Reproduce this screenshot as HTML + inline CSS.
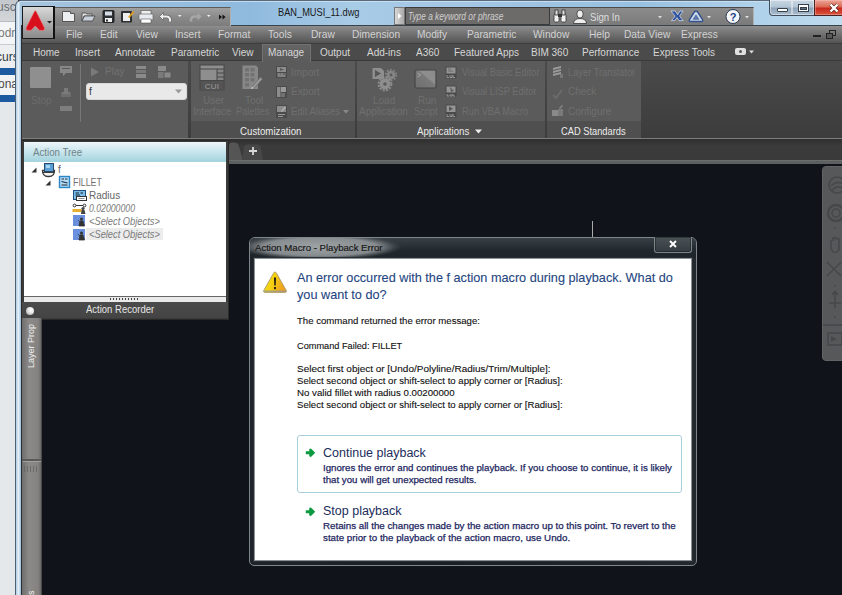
<!DOCTYPE html>
<html><head><meta charset="utf-8">
<style>
*{margin:0;padding:0;box-sizing:border-box}
html,body{width:842px;height:595px;overflow:hidden;background:#10131a;font-family:"Liberation Sans",sans-serif}
.a{position:absolute}
.t{position:absolute;white-space:nowrap;line-height:1}
.mn{position:absolute;top:30px;font-size:10.2px;color:#d2d2d2;white-space:nowrap;line-height:1}
.tb{position:absolute;top:47.5px;font-size:10px;color:#d6d6d6;white-space:nowrap;line-height:1}
.dim{color:#6f6f6f}
.dt{position:absolute;left:297px;font-size:9.6px;color:#111;white-space:nowrap;line-height:1;-webkit-text-stroke:0.12px #111}
</style></head><body>
<!-- ===== background explorer window on left ===== -->
<div class="a" style="left:0;top:0;width:18px;height:595px;background:#e5e8eb"></div>
<div class="a" style="left:0;top:0;width:18px;height:21px;background:linear-gradient(#c4c8cc,#d4d7da)"></div>
<div class="a" style="left:0;top:21px;width:18px;height:1px;background:#b8bcc0"></div>
<div class="a" style="left:0;top:22px;width:18px;height:22px;background:#f4f5f6"></div>
<div class="a" style="left:0;top:44px;width:18px;height:1px;background:#c8ccd0"></div>
<div class="a" style="left:0;top:45px;width:18px;height:23px;background:#eceef0"></div>
<div class="a" style="left:0;top:68px;width:18px;height:7px;background:#1d5aa0"></div>
<div class="a" style="left:0;top:75px;width:18px;height:21px;background:#f2f3f5"></div>
<div class="a" style="left:0;top:95px;width:18px;height:7px;background:#1d5aa0"></div>
<div class="t" style="left:-3px;top:1px;font-size:12px;color:#6a6e72">usc</div>
<div class="t" style="left:-2px;top:27px;font-size:12px;color:#7a7a7a">odr</div>
<div class="t" style="left:-4px;top:51px;font-size:12px;color:#2e3a44">curs</div>
<div class="t" style="left:-2px;top:78px;font-size:12px;color:#4a4a4a">ona</div>
<!-- ===== window frame ===== -->
<div class="a" style="left:15px;top:0;width:827px;height:595px;background:linear-gradient(90deg,#b4cde2 0,#e2eff8 2.5px,#b8d2e6 4px,#8fb0cc 6px);border-radius:6px 0 0 0;border-left:1px solid #4f6072;border-top:1px solid #5a6a7a"></div>
<!-- title bar glass -->
<div class="a" style="left:21px;top:1px;width:821px;height:25px;background:linear-gradient(90deg,#a6c4dd 0%,#8fbade 28%,#a8cbe6 40%,#a2c6e3 55%,#98c0e0 75%,#b0d2ea 90%,#c0dcee 100%)"></div>

<div class="a" style="left:20px;top:1px;width:822px;height:1px;background:#d0e4f2;opacity:0.8"></div>
<!-- app inner frame -->
<div class="a" style="left:21px;top:25px;width:821px;height:570px;background:#10131a;border-left:1px solid #2a2f36"></div>


<!-- ===== menu bar ===== -->
<div class="a" style="left:22px;top:25px;width:820px;height:18px;background:linear-gradient(#38424b 0,#38424b 1px,#8e8e8e 1px,#747474 45%,#5a5a5a 90%,#505050)"></div>
<div class="mn" style="left:66px">File</div>
<div class="mn" style="left:100px">Edit</div>
<div class="mn" style="left:136px">View</div>
<div class="mn" style="left:175px">Insert</div>
<div class="mn" style="left:218px">Format</div>
<div class="mn" style="left:268px">Tools</div>
<div class="mn" style="left:311px">Draw</div>
<div class="mn" style="left:352px">Dimension</div>
<div class="mn" style="left:417px">Modify</div>
<div class="mn" style="left:467px">Parametric</div>
<div class="mn" style="left:533px">Window</div>
<div class="mn" style="left:589px">Help</div>
<div class="mn" style="left:624px">Data View</div>
<div class="mn" style="left:681px">Express</div>
<div class="a" style="left:813px;top:35px;width:8px;height:2px;background:#222"></div>
<div class="a" style="left:829px;top:30px;width:7px;height:6px;border:1px solid #222"></div>
<div class="a" style="left:826px;top:33px;width:7px;height:6px;border:1px solid #222;background:#585858"></div>
<!-- ===== ribbon tabs ===== -->
<div class="a" style="left:22px;top:43px;width:820px;height:17px;background:#4b4b4b;border-top:1px solid #3e3e3e"></div>
<div class="a" style="left:262px;top:44px;width:49px;height:18px;background:linear-gradient(#646464,#5b5b5b);border:1px solid #727272;border-bottom:none;z-index:1"></div>
<div class="tb" style="left:33px">Home</div>
<div class="tb" style="left:75px">Insert</div>
<div class="tb" style="left:115px">Annotate</div>
<div class="tb" style="left:171px">Parametric</div>
<div class="tb" style="left:232px">View</div>
<div class="tb" style="left:268px;z-index:2">Manage</div>
<div class="tb" style="left:320px">Output</div>
<div class="tb" style="left:367px">Add-ins</div>
<div class="tb" style="left:416px">A360</div>
<div class="tb" style="left:454px">Featured Apps</div>
<div class="tb" style="left:531px">BIM 360</div>
<div class="tb" style="left:582px">Performance</div>
<div class="tb" style="left:653px">Express Tools</div>
<div class="a" style="left:735px;top:48px;width:11px;height:7px;background:#e0e0e0;border-radius:2px"></div>
<div class="a" style="left:739px;top:50px;width:3px;height:3px;background:#555;border-radius:50%"></div>
<svg class="a" style="left:749px;top:50px" width="5" height="4"><path d="M0 0.5 H5 L2.5 3.5Z" fill="#ddd"/></svg>
<!-- ===== ribbon panel ===== -->
<div class="a" style="left:22px;top:60px;width:820px;height:79px;background:linear-gradient(#4b4b4b,#3c3c3c);border-top:1px solid #3a3a3a"></div>


<!-- panels -->
<div class="a" style="left:22px;top:61px;width:166px;height:77px;background:#5b5b5b"></div>
<div class="a" style="left:191px;top:61px;width:164px;height:77px;background:#5b5b5b"></div>
<div class="a" style="left:191px;top:121px;width:164px;height:17px;background:#4f4f4f"></div>
<div class="a" style="left:357px;top:61px;width:188px;height:77px;background:#5b5b5b"></div>
<div class="a" style="left:357px;top:121px;width:188px;height:17px;background:#4f4f4f"></div>
<div class="a" style="left:547px;top:61px;width:94px;height:77px;background:#5b5b5b"></div>
<div class="a" style="left:547px;top:121px;width:94px;height:17px;background:#4f4f4f"></div>
<div class="t" style="left:240px;top:127px;font-size:10px;color:#ececec;transform:scaleX(0.97);transform-origin:0 0">Customization</div>
<div class="t" style="left:417px;top:127px;font-size:10px;color:#ececec;transform:scaleX(0.97);transform-origin:0 0">Applications</div>
<svg class="a" style="left:475px;top:129px" width="7" height="5"><path d="M0 0.5 H7 L3.5 4.5Z" fill="#eee"/></svg>
<div class="t" style="left:561px;top:127px;font-size:10px;color:#ececec;transform:scaleX(0.93);transform-origin:0 0">CAD Standards</div>
<!-- action recorder panel content -->
<div class="a" style="left:30px;top:67px;width:21px;height:21px;background:#8f8f8f;border-radius:1px"></div>
<div class="t dim" style="left:31px;top:96px;font-size:10px;color:#6c6c6c">Stop</div>
<svg class="a" style="left:58px;top:64px" width="18" height="50" viewBox="0 0 18 50">
 <path d="M2 2 H14 V9 H8 L5 12 V9 H2 Z" fill="#878787"/>
 <rect x="4" y="4" width="8" height="1" fill="#5b5b5b"/>
 <path d="M4 28 H12 L13 31 H3 Z M6 24 H10 V28 H6 Z" fill="#7a7a7a"/>
 <rect x="3" y="30" width="10" height="3" fill="#6e6e6e"/>
 <rect x="2" y="42" width="12" height="5" fill="#7e7e7e"/>
</svg>
<div class="a" style="left:80px;top:64px;width:1px;height:58px;background:#777"></div>
<svg class="a" style="left:90px;top:67px" width="10" height="10"><path d="M1 0.5 L9 5 L1 9.5Z" fill="#7a7a7a"/></svg>
<div class="t dim" style="left:105px;top:67px;font-size:10px;color:#717171">Play</div>
<svg class="a" style="left:134px;top:65px" width="40" height="14" viewBox="0 0 40 14">
 <rect x="2" y="1" width="10" height="3" fill="#8a8a8a"/><rect x="2" y="5" width="10" height="3" fill="#7a7a7a"/><rect x="2" y="9" width="10" height="4" fill="#8a8a8a"/>
 <rect x="24" y="1" width="8" height="5" fill="#8a8a8a"/><rect x="24" y="7" width="6" height="6" fill="#7a7a7a"/><rect x="30" y="7" width="7" height="6" fill="#8a8a8a" stroke="#5b5b5b"/>
</svg>
<div class="a" style="left:86px;top:83px;width:101px;height:17px;background:#e9e9e9;border-radius:3px;border:1px solid #d8d8d8"></div>
<div class="t" style="left:89px;top:87px;font-size:10px;color:#333">f</div>
<svg class="a" style="left:175px;top:89px" width="7" height="5"><path d="M0 0.5 H7 L3.5 4.5Z" fill="#999"/></svg>

<!-- customization content -->
<svg class="a" style="left:199px;top:64px" width="26" height="27" viewBox="0 0 26 27">
 <rect x="0.5" y="0.5" width="25" height="26" fill="#474747"/>
 <rect x="1.5" y="1.5" width="23" height="3" fill="#8e8e8e"/>
 <rect x="1.5" y="5.5" width="16" height="10.5" fill="#8e8e8e"/>
 <rect x="18.5" y="5.5" width="6" height="3" fill="#858585"/>
 <rect x="18.5" y="9.5" width="6" height="3" fill="#858585"/>
 <rect x="18.5" y="13.5" width="6" height="2.5" fill="#858585"/>
 <rect x="1.5" y="17" width="23" height="9" fill="#545454"/>
 <text x="13" y="24.5" font-family="Liberation Sans" font-size="8" fill="#9c9c9c" text-anchor="middle" letter-spacing="0.3">CUI</text>
</svg>
<svg class="a" style="left:240px;top:64px" width="24" height="27" viewBox="0 0 24 27">
 <path d="M2.5 1.5 H16 L18 3.5 V25 H2.5 Z" fill="#888"/>
 <g fill="#727272">
 <rect x="5" y="4" width="4" height="3.5"/><rect x="10.5" y="4" width="4" height="3.5"/>
 <rect x="5" y="9" width="4" height="3.5"/><rect x="10.5" y="9" width="4" height="3.5"/>
 <rect x="5" y="14" width="4" height="3.5"/><rect x="10.5" y="14" width="4" height="3.5"/>
 <rect x="5" y="19" width="4" height="3.5"/>
 </g>
 <path d="M12 23 L20.5 13 L22.5 15 L14 24.5 Z" fill="#9a9a9a" stroke="#5f5f5f" stroke-width="0.6"/>
 <path d="M11 25 L12 22.5 L14 24.3 Z" fill="#c8c8c8"/>
</svg>
<div class="t dim" style="left:203px;top:96px;font-size:10px">User</div>
<div class="t dim" style="left:193px;top:107px;font-size:10px;transform:scaleX(0.98);transform-origin:0 0">Interface</div>
<div class="t dim" style="left:245px;top:96px;font-size:10px">Tool</div>
<div class="t dim" style="left:236px;top:107px;font-size:10px;transform:scaleX(0.92);transform-origin:0 0">Palettes</div>
<svg class="a" style="left:275px;top:65px" width="14" height="54" viewBox="0 0 14 54">
 <rect x="1" y="1" width="11" height="12" fill="#4a4a4a"/>
 <rect x="2" y="2" width="9" height="5" fill="#8c8c8c"/><path d="M5 3 L9 4.5 L5 6 Z" fill="#5a5a5a"/>
 <rect x="2" y="8" width="9" height="4" fill="#6a6a6a"/><path d="M3 9 H5 M6 9 H8 M3 11 H10" stroke="#a0a0a0" stroke-width="0.9"/>
 <rect x="1" y="21" width="11" height="12" fill="#4a4a4a"/>
 <rect x="2" y="22" width="3.5" height="10" fill="#8c8c8c"/><rect x="6" y="22" width="5" height="5" fill="#9a9a9a"/>
 <path d="M6 29 H10 M6 31 H10" stroke="#a0a0a0" stroke-width="0.9"/>
 <rect x="1" y="40" width="11" height="13" fill="#4a4a4a"/>
 <rect x="2" y="41" width="9" height="6" fill="#8c8c8c"/><path d="M6 46 L10 41.5 L11 42.5 L7 47 Z" fill="#b0b0b0"/>
 <path d="M3 49.5 H10 M3 51.5 H8" stroke="#a0a0a0" stroke-width="0.9"/>
</svg>
<div class="t dim" style="left:291px;top:68px;font-size:10px">Import</div>
<div class="t dim" style="left:291px;top:87px;font-size:10px">Export</div>
<div class="t dim" style="left:291px;top:107px;font-size:10px;transform:scaleX(0.95);transform-origin:0 0">Edit Aliases</div>
<svg class="a" style="left:343px;top:110px" width="6" height="4"><path d="M0 0 H6 L3 3.5Z" fill="#8a8a8a"/></svg>

<!-- applications content -->
<svg class="a" style="left:371px;top:67px" width="28" height="25" viewBox="0 0 28 25">
 <path d="M1.5 1 H10 L13 4 V12 H1.5 Z" fill="#8e8e8e"/>
 <path d="M4 3 L10 6.5 L4 10 Z" fill="#555"/>
 <circle cx="20" cy="8" r="4.3" fill="#858585"/>
 <circle cx="20" cy="8" r="5.2" fill="none" stroke="#858585" stroke-width="1.8" stroke-dasharray="1.7 1.57"/>
 <circle cx="20" cy="8" r="1.4" fill="#5b5b5b"/>
 <circle cx="14" cy="17" r="5.4" fill="#8e8e8e"/>
 <circle cx="14" cy="17" r="6.4" fill="none" stroke="#8e8e8e" stroke-width="2" stroke-dasharray="2 1.35"/>
 <circle cx="14" cy="17" r="1.8" fill="#5b5b5b"/>
</svg>
<svg class="a" style="left:414px;top:69px" width="24" height="20" viewBox="0 0 24 20">
 <defs><linearGradient id="rs" x1="0" y1="1" x2="1" y2="0"><stop offset="0" stop-color="#6e6e6e"/><stop offset="0.55" stop-color="#7a7a7a"/><stop offset="0.6" stop-color="#8e8e8e"/><stop offset="1" stop-color="#8a8a8a"/></linearGradient></defs>
 <rect x="1" y="1" width="21" height="18" rx="1.5" fill="url(#rs)" stroke="#474747" stroke-width="1.2"/>
 <path d="M3.5 4 L6.5 6 L3.5 8" stroke="#9a9a9a" stroke-width="1.2" fill="none"/>
</svg>
<div class="t dim" style="left:373px;top:96px;font-size:10px">Load</div>
<div class="t dim" style="left:359px;top:107px;font-size:10px">Application</div>
<div class="t dim" style="left:418px;top:96px;font-size:10px">Run</div>
<div class="t dim" style="left:414px;top:107px;font-size:10px;transform:scaleX(0.92);transform-origin:0 0">Script</div>
<svg class="a" style="left:445px;top:66px" width="13" height="55" viewBox="0 0 13 55">
 <rect x="0.5" y="0.5" width="11" height="12" fill="#4a4a4a"/>
 <rect x="1.5" y="1.5" width="9" height="6" fill="#949494"/><path d="M3 3 H6 M3 5 H8" stroke="#666" stroke-width="0.9"/>
 <path d="M2 9 V11.5 H4 M5 9 V11.5 H7 V9 M8 9 V11.5 H10" stroke="#a8a8a8" stroke-width="0.8" fill="none"/>
 <rect x="0.5" y="19.5" width="11" height="11" fill="#4a4a4a"/>
 <rect x="1.5" y="20.5" width="9" height="6" fill="#949494"/><path d="M5 21 L9 25 L6 26 Z" fill="#606060"/>
 <path d="M2 28 V30 H4 M5 28 V30 H7 V28 M8 28 V30 H10" stroke="#a8a8a8" stroke-width="0.8" fill="none"/>
 <rect x="0.5" y="38.5" width="11" height="13" fill="#4a4a4a"/>
 <rect x="1.5" y="39.5" width="9" height="6.5" fill="#949494"/><path d="M4 40.5 L8 42.75 L4 45 Z" fill="#555"/>
 <path d="M2 48 V50.5 H4 M5 48 V50.5 H7 V48 M8 48 V50.5 H10" stroke="#a8a8a8" stroke-width="0.8" fill="none"/>
</svg>
<div class="t dim" style="left:462px;top:68px;font-size:10px;transform:scaleX(0.93);transform-origin:0 0">Visual Basic Editor</div>
<div class="t dim" style="left:462px;top:87px;font-size:10px;transform:scaleX(0.93);transform-origin:0 0">Visual LISP Editor</div>
<div class="t dim" style="left:462px;top:107px;font-size:10px;transform:scaleX(0.93);transform-origin:0 0">Run VBA Macro</div>

<!-- cad standards -->
<svg class="a" style="left:551px;top:65px" width="14" height="54" viewBox="0 0 14 54">
 <path d="M2 3 L10 1 V3 L2 5Z M2 6 L10 4 V6 L2 8Z M2 9 L10 7 V9 L2 11Z" fill="#9a9a9a"/>
 <rect x="9" y="9" width="3" height="4" fill="#777"/>
 <path d="M2 30 L5 33 L11 25" stroke="#6a6a6a" stroke-width="2" fill="none"/>
 <rect x="1" y="45" width="6" height="6" fill="#8a8a8a"/><rect x="7" y="44" width="5" height="7" fill="#7a7a7a"/><path d="M8 43 L11 40 L12 41 L9 44Z" fill="#888"/>
</svg>
<div class="t dim" style="left:568px;top:68px;font-size:10px;transform:scaleX(0.93);transform-origin:0 0">Layer Translator</div>
<div class="t dim" style="left:568px;top:87px;font-size:10px">Check</div>
<div class="t dim" style="left:568px;top:107px;font-size:10px">Configure</div>

<!-- ===== QAT ===== -->
<div class="a" style="left:55px;top:7px;width:176px;height:19px;background:linear-gradient(#a0a0a0,#8a8a8a 50%,#7c7c7c);border-top:1px solid #5c5c5c;border-right:1px solid #b0b0b0"></div>
<!-- app button -->
<div class="a" style="left:22px;top:6px;width:33px;height:33px;background:linear-gradient(#d9d9d9,#a9a9a9 60%,#8a8a8a);border:1px solid #1a1a1a;border-right:2px solid #111"></div>
<svg class="a" style="left:22px;top:6px" width="33" height="33" viewBox="0 0 33 33">
 <path d="M13.3 4.8 Q14 4.8 14.6 6.2 L22.4 21.6 Q23.2 24.4 20.8 24.4 L17.6 24.4 L13.3 20 L9 24.4 L5.8 24.4 Q3.4 24.4 4.2 21.6 L12 6.2 Q12.6 4.8 13.3 4.8 Z" fill="#d8101e" stroke="#f08a8a" stroke-width="0.6"/>
 <path d="M25 15 L30 15 L27.5 17.5 Z" fill="#222"/>
</svg>
<!-- QAT icons -->
<svg class="a" style="left:62px;top:9px" width="170" height="16" viewBox="0 0 170 16">
 <!-- new -->
 <path d="M0.5 2.5 H8.5 V4.5 H12.5 V12.5 H0.5 Z" fill="#eceef0" stroke="#555" stroke-width="1"/>
 <!-- open -->
 <path d="M20 4 H24 L25 5 H30 V7 H22 L20 12 Z" fill="#ddd" stroke="#444" stroke-width="0.8"/>
 <path d="M20 12 L22.5 7 H33 L30.5 12 Z" fill="#c9d2dc" stroke="#444" stroke-width="0.8"/>
 <!-- save -->
 <rect x="41" y="1.5" width="11" height="12" rx="1" fill="#2c2f33" stroke="#222"/>
 <rect x="43" y="2.5" width="7" height="4" fill="#d6dde6"/>
 <rect x="43" y="9" width="7" height="4" fill="#f0f0f0"/>
 <rect x="44" y="10.5" width="2" height="2" fill="#333"/>
 <!-- saveas -->
 <rect x="59" y="2" width="11" height="11.5" rx="1" fill="#2c2f33"/>
 <rect x="61" y="4" width="7" height="8" fill="#eee"/>
 <path d="M66 8 L71 2 L72.5 3 L67.5 9 Z" fill="#e0a020"/>
 <!-- print -->
 <rect x="79" y="1.5" width="10" height="4" fill="#eee" stroke="#555" stroke-width="0.6"/>
 <rect x="77" y="5" width="14" height="6" rx="1" fill="#e8ecf0" stroke="#555" stroke-width="0.6"/>
 <rect x="79" y="10" width="10" height="4" fill="#fff" stroke="#555" stroke-width="0.6"/>
 <!-- undo -->
 <path d="M100.5 7.5 H104 Q108 7.5 108 11 V12.5" fill="none" stroke="#666" stroke-width="3.6"/>
 <path d="M97.5 7.5 L101.5 3.5 V11.5 Z" fill="#eee" stroke="#666" stroke-width="0.8"/>
 <path d="M100.5 7.5 H104 Q108 7.5 108 11 V12.5" fill="none" stroke="#f0f0f0" stroke-width="2.2"/>
 <path d="M116 6 L119.5 6 L117.75 8 Z" fill="#f4f4f4"/>
 <!-- redo -->
 <path d="M136.5 7.5 H133 Q129 7.5 129 11 V12.5" fill="none" stroke="#a5a5a5" stroke-width="2.6"/>
 <path d="M139.5 7.5 L135.5 3.5 V11.5 Z" fill="#a5a5a5"/>
 <path d="M145 6 L148.5 6 L146.75 8 Z" fill="#f4f4f4"/>
 <!-- more -->
 <path d="M157 5.5 L160 8 L157 10.5 Z M160.5 5.5 L163.5 8 L160.5 10.5 Z" fill="#111"/>
</svg>
<!-- title -->
<div class="t" style="left:278px;top:7px;font-size:10.5px;color:#1a1a1a;transform:scaleX(0.88);transform-origin:0 0">BAN_MUSI_11.dwg</div>

<!-- ===== InfoCenter ===== -->
<div class="a" style="left:394px;top:7px;width:11px;height:18px;background:linear-gradient(90deg,#d8d8d8,#a8a8a8);border:1px solid #777"></div>
<svg class="a" style="left:397px;top:12px" width="6" height="8"><path d="M1 1 L4.5 4 L1 7Z" fill="#fff"/></svg>
<div class="a" style="left:405px;top:7px;width:349px;height:18px;background:linear-gradient(#8c8c8c,#7a7a7a);border-top:1px solid #4a4a4a;border-right:1px solid #b0b0b0"></div>
<div class="a" style="left:405px;top:7px;width:145px;height:18px;background:#6d6b6a;border:1px solid #3a3a3a"></div>
<div class="t" style="left:408px;top:12px;font-size:10px;font-style:italic;color:#cfcfcf;transform:scaleX(0.83);transform-origin:0 0">Type a keyword or phrase</div>
<svg class="a" style="left:552px;top:8px" width="200" height="17" viewBox="0 0 200 17">
 <!-- binoculars -->
 <rect x="2" y="6" width="5" height="8" rx="1.5" fill="#f2f2f2" stroke="#333" stroke-width="0.8"/>
 <rect x="9" y="6" width="5" height="8" rx="1.5" fill="#f2f2f2" stroke="#333" stroke-width="0.8"/>
 <rect x="3" y="2" width="3" height="5" fill="#ddd" stroke="#333" stroke-width="0.8"/>
 <rect x="10" y="2" width="3" height="5" fill="#ddd" stroke="#333" stroke-width="0.8"/>
 <rect x="6" y="6" width="4" height="3" fill="#333"/>
 <!-- person -->
 <ellipse cx="28" cy="6" rx="3.2" ry="4" fill="#eee" stroke="#333" stroke-width="0.8"/>
 <path d="M21.5 15.5 Q22 10.5 28 10.5 Q34 10.5 34.5 15.5 Z" fill="#eee" stroke="#333" stroke-width="0.8"/>
 <!-- dropdown -->
 <path d="M106 8 L110 8 L108 10.5 Z" fill="#ddd"/>
 <!-- X -->
 <path d="M119 3 H123.2 L125.6 6.8 L128 3 H131 Q129 6 127.6 8 Q129.2 10.5 131.2 12.6 H127 L125 9.6 L122.8 12.6 H119.4 Q121.5 10.5 123.2 8 Q121.2 6 119 3 Z" fill="#2c4f9e" stroke="#dde6f4" stroke-width="0.7"/>
 <!-- A360 -->
 <path d="M144 3 Q145 3 146 4.5 L150.5 11.5 Q151.5 13.5 149.5 13.5 H138.5 Q136.5 13.5 137.5 11.5 L142 4.5 Q143 3 144 3 Z" fill="#c9d6ea" stroke="#34528a" stroke-width="1.4"/>
 <path d="M144 7 L146.8 11.3 H141.2 Z" fill="#5d7bb5" stroke="#34528a" stroke-width="0.6"/>
 <path d="M155 8 L159 8 L157 10.5 Z" fill="#ddd"/>
 <!-- help -->
 <circle cx="181" cy="8.5" r="7" fill="#f4f6f8" stroke="#2a3a55" stroke-width="1"/>
 <text x="181" y="12.5" font-family="Liberation Sans" font-weight="bold" font-size="11" fill="#1b3f86" text-anchor="middle">?</text>
 <path d="M193 8 L197 8 L195 10.5 Z" fill="#ddd"/>
</svg>
<div class="t" style="left:590px;top:12.5px;font-size:10.3px;color:#dedede;transform:scaleX(0.93);transform-origin:0 0">Sign In</div>

<!-- window controls -->
<div class="a" style="left:769px;top:0;width:24px;height:16px;background:linear-gradient(#c8d6e2,#b4c6d6 45%,#8fa5b9 55%,#a9bccd);border:1px solid #3f4f5f;border-top:none;border-radius:0 0 0 4px;box-shadow:inset 0 0 0 1px rgba(255,255,255,0.45)"></div>
<div class="a" style="left:792px;top:0;width:23px;height:16px;background:linear-gradient(#c8d6e2,#b4c6d6 45%,#8fa5b9 55%,#a9bccd);border:1px solid #3f4f5f;border-top:none;border-left:none;box-shadow:inset 0 0 0 1px rgba(255,255,255,0.45)"></div>
<div class="a" style="left:814px;top:0;width:30px;height:16px;background:linear-gradient(#eaa598,#dd6a55 45%,#c8281c 55%,#d8553c);border:1px solid #4a2020;border-top:none;box-shadow:inset 0 0 0 1px rgba(255,200,190,0.4)"></div>
<div class="a" style="left:777px;top:8px;width:11px;height:4px;background:#fff;border:1px solid #34404c;border-radius:1px"></div>
<div class="a" style="left:798px;top:4px;width:11px;height:8px;border:1px solid #34404c;background:#fff"></div>
<div class="a" style="left:800px;top:7px;width:7px;height:3px;background:#5f7080;border:1px solid #34404c"></div>
<svg class="a" style="left:828px;top:2px" width="12" height="12" viewBox="0 0 12 12"><path d="M2.5 2.5 L9.5 9.5 M9.5 2.5 L2.5 9.5" stroke="#5a2a22" stroke-width="3.8"/><path d="M2.5 2.5 L9.5 9.5 M9.5 2.5 L2.5 9.5" stroke="#fff" stroke-width="2.4"/></svg>


<!-- ===== file tabs ===== -->
<div class="a" style="left:22px;top:138px;width:820px;height:1px;background:#7c7c7c"></div>
<div class="a" style="left:22px;top:139px;width:820px;height:24px;background:linear-gradient(#2f2f2f,#3b3b3b 30%,#3a3a3a)"></div>
<div class="a" style="left:22px;top:160px;width:820px;height:4px;background:#5c615f;border-top:1px solid #6a6f6d"></div>
<svg class="a" style="left:226px;top:141px" width="40" height="22" viewBox="0 0 40 22">
 <path d="M2 19 L3 4 Q3.5 1.5 6 1.5 H9 Q11.5 1.5 12.5 4 L17 19 Z" fill="#555"/>
 <path d="M16 19 L18 7 Q18.7 3.5 22 3.5 H31 Q34 3.5 35 7 L37 19 Z" fill="#474747"/>
 <path d="M23 10 H31 M27 6 V14" stroke="#d8d8d8" stroke-width="1.8"/>
</svg>

<!-- ===== Action tree panel ===== -->
<div class="a" style="left:21px;top:140px;width:208px;height:180px;background:#3a3a3a;border:1px solid #2a2a2a"></div>
<div class="a" style="left:24px;top:142px;width:202px;height:154px;background:#fff"></div>
<div class="a" style="left:24px;top:142px;width:202px;height:20px;background:linear-gradient(#eef6fa,#cfe8ef 40%,#a2d4dd)"></div>
<div class="t" style="left:33px;top:148px;font-size:10px;color:#6f8388;transform:scaleX(0.97);transform-origin:0 0">Action Tree</div>
<svg class="a" style="left:24px;top:160px" width="50" height="30" viewBox="0 0 50 30">
 <path d="M7.5 12.5 L12.5 7.5 V12.5 Z" fill="#333"/>
 <path d="M21.5 25.5 L26.5 20.5 V25.5 Z" fill="#333"/>
 <path d="M18.5 10.5 Q18.5 16.5 24 16.5 H25 Q30.5 16.5 30.5 10.5 Z" fill="#f4f4f4" stroke="#3a3a3a" stroke-width="1.3"/>
 <rect x="20.5" y="3.5" width="9" height="8" fill="#5aa0d8" stroke="#2a4a6a" stroke-width="1"/>
 <rect x="22" y="5" width="4" height="3" fill="#a8d4f4"/>
 <path d="M18.5 12.5 H30.5" stroke="#3a3a3a" stroke-width="1"/>
 <rect x="35.5" y="16.5" width="10" height="11" fill="#b4dcf4" stroke="#2a86c8" stroke-width="1.4"/>
 <path d="M37.5 19 H40 M41 19 H43.5 M37.5 21.5 L43.5 23 M37.5 25 H43.5" stroke="#1a2a3a" stroke-width="1.1"/>
</svg>
<div class="t" style="left:58px;top:165px;font-size:10px;color:#666">f</div>
<div class="t" style="left:73px;top:178px;font-size:10px;color:#707070;transform:scaleX(0.88);transform-origin:0 0">FILLET</div>
<svg class="a" style="left:72px;top:189px" width="16" height="52" viewBox="0 0 16 52">
 <rect x="1.5" y="1.5" width="12" height="9" fill="#7cbde8" stroke="#1e4f80" stroke-width="1"/>
 <path d="M3.5 4 H7 M3.5 6 H8 M8.5 4 H11" stroke="#123" stroke-width="1"/>
 <rect x="4.5" y="7.5" width="10" height="4" fill="#fff" stroke="#333" stroke-width="1"/>
 <path d="M6.5 9.5 H12.5" stroke="#777" stroke-width="0.8"/>
 <circle cx="2.5" cy="16.5" r="1.4" fill="#fff" stroke="#333" stroke-width="1"/><circle cx="12.5" cy="16.5" r="1.4" fill="#fff" stroke="#333" stroke-width="1"/><rect x="4" y="16" width="7" height="1" fill="#333"/>
 <rect x="0.5" y="20" width="9" height="3" fill="#e8b030"/>
 <circle cx="11" cy="19.5" r="1.6" fill="#444"/>
 <path d="M9 25 L9.5 21 H12.5 L13.5 25 Z" fill="#444"/>
 <rect x="1" y="26" width="12" height="11" fill="#6a8fdc"/>
 <circle cx="9.5" cy="30" r="1.5" fill="#333"/>
 <path d="M7 37 L8 32 H11 L12.5 37 Z M8 33 L6 31" fill="#333" stroke="#333" stroke-width="0.8"/>
 <rect x="1" y="40" width="12" height="11" fill="#6a8fdc"/>
 <circle cx="9.5" cy="44" r="1.5" fill="#333"/>
 <path d="M7 51 L8 46 H11 L12.5 51 Z M8 47 L6 45" fill="#333" stroke="#333" stroke-width="0.8"/>
</svg>
<div class="t" style="left:89px;top:191px;font-size:10px;color:#666">Radius</div>
<div class="t" style="left:89px;top:204px;font-size:10px;font-style:italic;color:#7a7a7a;transform:scaleX(0.87);transform-origin:0 0">0.02000000</div>
<div class="t" style="left:89px;top:217px;font-size:10px;font-style:italic;color:#7a7a7a;transform:scaleX(0.93);transform-origin:0 0">&lt;Select Objects&gt;</div>
<div class="a" style="left:86px;top:228px;width:77px;height:12px;background:#ececec"></div>
<div class="t" style="left:89px;top:230px;font-size:10px;font-style:italic;color:#7a7a7a;transform:scaleX(0.93);transform-origin:0 0">&lt;Select Objects&gt;</div>
<div class="a" style="left:24px;top:296px;width:202px;height:1px;background:#666"></div>
<div class="a" style="left:24px;top:297px;width:202px;height:5px;background:#e9e9e9"></div>
<div class="a" style="left:110px;top:298px;width:29px;height:2px;background:repeating-linear-gradient(90deg,#444 0 1px,transparent 1px 3px)"></div>
<div class="a" style="left:22px;top:302px;width:206px;height:16px;background:linear-gradient(#4c4c4c,#444)"></div>
<div class="t" style="left:86px;top:305px;font-size:10px;color:#e6e6e6;transform:scaleX(0.95);transform-origin:0 0">Action Recorder</div>
<div class="a" style="left:26px;top:307px;width:8px;height:8px;border-radius:50%;background:radial-gradient(circle at 65% 35%,#fff 0,#e6e6e6 40%,#9a9a9a 100%)"></div>

<!-- ===== left palette ===== -->
<div class="a" style="left:22px;top:318px;width:20px;height:277px;background:linear-gradient(90deg,#6e6e6e,#8c8a88 35%,#858381 80%,#6a6a6a 95%,#2e2e2e)"></div>
<div class="a" style="left:22px;top:459px;width:19px;height:2px;background:#5a5a5a"></div>
<div class="a" style="left:23px;top:461px;width:18px;height:1px;background:#a0a0a0"></div>
<div class="a" style="left:24px;top:466px;width:15px;height:6px;background:repeating-linear-gradient(90deg,#5f5f5f 0 1px,transparent 1px 3px);opacity:0.7"></div>
<div class="t" style="left:27px;top:368px;font-size:9px;color:#f0f0f0;transform:rotate(-90deg);transform-origin:0 0;width:50px">Layer Prop</div>
<div class="t" style="left:27px;top:595px;font-size:9px;color:#f0f0f0;transform:rotate(-90deg);transform-origin:0 0">s</div>

<!-- ===== right toolbar ===== -->
<div class="a" style="left:822px;top:166px;width:24px;height:195px;background:#57585a;border-radius:4px;border:1px solid #626365"></div>
<svg class="a" style="left:822px;top:166px" width="20" height="195" viewBox="0 0 20 195">
 <g fill="none" stroke="#47484a" stroke-width="1.6">
 <circle cx="15" cy="19" r="8"/>
 <path d="M9 20 Q14 15 20 17 M10 24 Q15 19 20 22"/>
 <circle cx="14" cy="47" r="8" stroke-width="2.4"/>
 <circle cx="14" cy="47" r="4"/>
 <path d="M9 82 V76 Q9 74 11 74 V72 Q13 71 14 72 V73 Q16 72 17 73 V84 Q12 90 9 82 Z"/>
 <path d="M5 96 L12 103 M19 96 L12 103 M5 110 L12 103 M19 110 L12 103"/>
 <path d="M13 125 V142 M7 137 H19 M13 125 L10 129 M13 125 L16 129"/>
 <path d="M1 159 H20"/>
 <rect x="6" y="167" width="14" height="12"/>
 </g>
 <g fill="#47484a">
 <circle cx="13" cy="62" r="1"/><circle cx="13" cy="120" r="1"/><circle cx="13" cy="151" r="1"/>
 <path d="M9 170 L15 173 L9 176 Z"/>
 </g>
</svg>

<!-- crosshair line -->
<div class="a" style="left:592px;top:221px;width:1px;height:16px;background:#aaa"></div>


<!-- ===== Dialog ===== -->
<div class="a" style="left:249px;top:237px;width:448px;height:329px;background:linear-gradient(90deg,#1e2429,#1a1f25 40%,#1c2227 70%,#22282d);border:1px solid #7f878c;border-radius:6px 6px 5px 5px"></div>
<div class="a" style="left:250px;top:238px;width:446px;height:20px;background:radial-gradient(ellipse 82px 13px at 70px 9px,rgba(165,170,172,0.95) 0%,rgba(150,155,158,0.85) 70%,rgba(90,96,100,0.3) 92%,rgba(40,46,50,0) 100%),linear-gradient(#3a4146,#22292e 60%,#1e2429);border-radius:5px 5px 0 0"></div>
<div class="a" style="left:254px;top:258px;width:438px;height:303px;background:#fff;border:1px solid #8a9196;outline:1px solid #2a2e33"></div>
<div class="t" style="left:255px;top:243px;font-size:9.6px;color:#151515;-webkit-text-stroke:0.15px #151515">Action Macro - Playback Error</div>
<div class="a" style="left:654px;top:237px;width:38px;height:16px;background:linear-gradient(#4a5256,#353b40);border:1px solid #7d8589;border-top:none;border-radius:0 0 3px 3px;box-shadow:inset 0 0 0 1px rgba(0,0,0,0.3)"></div>
<svg class="a" style="left:668px;top:239px" width="10" height="10" viewBox="0 0 10 10"><path d="M2 2 L8 8 M8 2 L2 8" stroke="#fff" stroke-width="1.9"/></svg>

<svg class="a" style="left:262px;top:270px" width="26" height="24" viewBox="0 0 26 24">
 <defs><linearGradient id="wg" x1="0" y1="0" x2="1" y2="0.3"><stop offset="0" stop-color="#f2e020"/><stop offset="0.5" stop-color="#f4d010"/><stop offset="1" stop-color="#f0a020"/></linearGradient></defs>
 <path d="M13 2 Q13.8 2 14.4 3.1 L24.3 20.6 Q24.9 22.4 23 22.4 H3 Q1.1 22.4 1.7 20.6 L11.6 3.1 Q12.2 2 13 2 Z" fill="url(#wg)" stroke="#a89a6a" stroke-width="0.9"/>
 <path d="M1.8 21.2 H24.2" stroke="#9a9a90" stroke-width="1.2"/>
 <path d="M12 7.5 H14 L13.7 15.5 H12.3 Z" fill="#201a10"/>
 <rect x="12.1" y="17" width="1.8" height="2.2" fill="#201a10"/>
</svg>
<div class="t" style="left:297px;top:270px;font-size:12.7px;color:#24467f;line-height:16.5px;-webkit-text-stroke:0.1px #24467f">An error occurred with the f action macro during playback. What do<br>you want to do?</div>
<div class="dt" style="top:316px">The command returned the error message:</div>
<div class="dt" style="top:341px;font-size:9.4px;transform:scaleX(0.98);transform-origin:0 0">Command Failed: FILLET</div>
<div class="dt" style="top:364px;font-size:9.9px;transform:scaleX(1.01);transform-origin:0 0">Select first object or [Undo/Polyline/Radius/Trim/Multiple]:</div>
<div class="dt" style="top:376px;font-size:9.9px;transform:scaleX(0.97);transform-origin:0 0">Select second object or shift-select to apply corner or [Radius]:</div>
<div class="dt" style="top:388px;font-size:9.9px;transform:scaleX(0.98);transform-origin:0 0">No valid fillet with radius 0.00200000</div>
<div class="dt" style="top:400px;font-size:9.9px;transform:scaleX(0.97);transform-origin:0 0">Select second object or shift-select to apply corner or [Radius]:</div>

<div class="a" style="left:297px;top:435px;width:385px;height:58px;border:1px solid #a8d0dc;border-radius:3px;background:#fff"></div>
<svg class="a" style="left:305px;top:448px" width="11" height="10" viewBox="0 0 11 10"><path d="M0.8 3.2 H4.2 Q3.8 0.4 5.2 0.4 Q6 0.4 7 1.4 L10.2 4.7 L7 8 Q6 9 5.2 9 Q3.8 9 4.2 6.2 H0.8 Z" fill="#0c9a40"/></svg>
<div class="t" style="left:323px;top:447px;font-size:12.5px;color:#1b2c5c">Continue playback</div>
<div class="t" style="left:323px;top:462px;font-size:9.7px;color:#1b2560;line-height:11.6px;-webkit-text-stroke:0.25px #1b2560">Ignores the error and continues the playback. If you choose to continue, it is likely<br>that you will get unexpected results.</div>
<svg class="a" style="left:305px;top:506.5px" width="11" height="10" viewBox="0 0 11 10"><path d="M0.8 3.2 H4.2 Q3.8 0.4 5.2 0.4 Q6 0.4 7 1.4 L10.2 4.7 L7 8 Q6 9 5.2 9 Q3.8 9 4.2 6.2 H0.8 Z" fill="#0c9a40"/></svg>
<div class="t" style="left:323px;top:505px;font-size:12.5px;color:#1b2c5c">Stop playback</div>
<div class="t" style="left:323px;top:520px;font-size:9.75px;color:#1b2560;line-height:11.6px;-webkit-text-stroke:0.25px #1b2560">Retains all the changes made by the action macro up to this point. To revert to the<br>state prior to the playback of the action macro, use Undo.</div>

</body></html>
